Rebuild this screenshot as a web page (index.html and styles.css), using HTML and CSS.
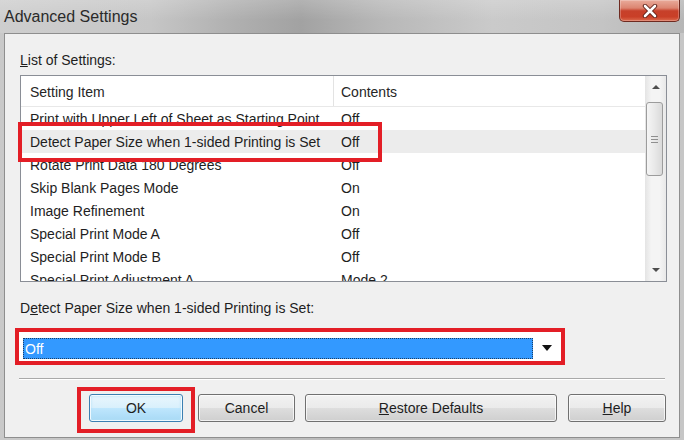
FILE: index.html
```html
<!DOCTYPE html>
<html>
<head>
<meta charset="utf-8">
<link rel="stylesheet" href="styles.css">
</head>
<body>
<div class="window">
  <div class="titlebar">
    <span class="title">Advanced Settings</span>
    <div class="close">
      <svg width="16" height="14" viewBox="0 0 16 14">
        <path d="M3 2 L13 12 M13 2 L3 12" stroke="#5a1d14" stroke-width="4.4" stroke-linecap="round" fill="none"/>
        <path d="M3 2 L13 12 M13 2 L3 12" stroke="#ffffff" stroke-width="2.6" stroke-linecap="round" fill="none"/>
      </svg>
    </div>
  </div>
  <div class="client">
    <div class="label"><u>L</u>ist of Settings:</div>
    <div class="listbox">
      <div class="listmain">
        <div class="header"><div class="c1">Setting Item</div><div class="c2">Contents</div></div>
        <div class="row"><div class="c1">Print with Upper Left of Sheet as Starting Point</div><div class="c2">Off</div></div>
        <div class="row sel"><div class="c1">Detect Paper Size when 1-sided Printing is Set</div><div class="c2">Off</div></div>
        <div class="row"><div class="c1">Rotate Print Data 180 Degrees</div><div class="c2">Off</div></div>
        <div class="row"><div class="c1">Skip Blank Pages Mode</div><div class="c2">On</div></div>
        <div class="row"><div class="c1">Image Refinement</div><div class="c2">On</div></div>
        <div class="row"><div class="c1">Special Print Mode A</div><div class="c2">Off</div></div>
        <div class="row"><div class="c1">Special Print Mode B</div><div class="c2">Off</div></div>
        <div class="row"><div class="c1">Special Print Adjustment A</div><div class="c2">Mode 2</div></div>
      </div>
      <div class="vscroll">
        <div class="sbtn"><span class="arrow-up"></span></div>
        <div class="track"><div class="thumb"><span class="grip"></span></div></div>
        <div class="sbtn"><span class="arrow-down"></span></div>
      </div>
    </div>
    <div class="label label2">D<u>e</u>tect Paper Size when 1-sided Printing is Set:</div>
    <div class="combo-mark">
      <div class="combo">
        <div class="combo-sel">Off</div>
        <div class="combo-arrow"><span class="arrow-down big"></span></div>
      </div>
    </div>
    <div class="sep"></div>
    <div class="buttons">
      <div class="ok-mark"><button class="btn default">OK</button></div>
      <button class="btn cancel">Cancel</button>
      <button class="btn restore"><u>R</u>estore Defaults</button>
      <button class="btn help"><u>H</u>elp</button>
    </div>
    <div class="row-mark"></div>
  </div>
</div>
</body>
</html>
```
FILE: styles.css
```css
html, body {
  margin: 0;
  padding: 0;
}
body {
  width: 684px;
  height: 440px;
  overflow: hidden;
  font-family: "Liberation Sans", Arial, sans-serif;
  background: #c2c2c2;
}
.window {
  width: 684px;
  height: 440px;
  display: flex;
  flex-direction: column;
  background: linear-gradient(90deg, #c9c9c9, #bdbdbd 40%, #b9b9b9 60%, #c6c6c6);
}
.titlebar {
  height: 33px;
  flex: none;
  display: flex;
  align-items: flex-start;
  background:
    linear-gradient(rgba(255,255,255,0.18), rgba(255,255,255,0) 60%),
    linear-gradient(90deg, #cecece 0%, #c6c6c6 22%, #b0b0b0 34%, #a2a2a2 44%, #b8b8b8 56%, #cacaca 72%, #c4c4c4 88%, #b6b6b6 100%);
}
.title {
  font-size: 16px;
  line-height: 33px;
  padding-left: 4px;
  color: #2a2a2a;
}
.close {
  margin-left: auto;
  margin-right: 4px;
  width: 61px;
  height: 22px;
  box-sizing: border-box;
  border: 1px solid #6e2a20;
  border-top: none;
  border-radius: 0 0 5px 5px;
  background: linear-gradient(#e9ab9b 0%, #dc8571 38%, #c7402a 52%, #c93f27 80%, #dc6a4e 100%);
  display: flex;
  align-items: center;
  justify-content: center;
  box-shadow: inset 0 0 0 1px rgba(255,255,255,0.25);
}
.client {
  position: relative;
  margin: 0 4px;
  height: 405px;
  box-sizing: border-box;
  border: 1px solid #8e8e8e;
  background: #f0f0f0;
  padding: 18px 0 0 15px;
  color: #1e1e1e;
}
.label {
  font-size: 14px;
  line-height: 16px;
}
.label2 {
  margin-top: 18px;
}
.listbox {
  margin-top: 7px;
  width: 647px;
  height: 207px;
  box-sizing: border-box;
  border: 1px solid #8a8e96;
  background: #ffffff;
  display: flex;
  font-size: 14px;
}
.listmain {
  width: 624px;
  overflow: hidden;
}
.header {
  display: flex;
  height: 31px;
  line-height: 32px;
  box-sizing: border-box;
  border-bottom: 1px solid #e8e8e8;
  color: #262626;
}
.c1 {
  width: 313px;
  flex: none;
  box-sizing: border-box;
  padding-left: 9px;
  white-space: nowrap;
  overflow: hidden;
}
.c2 {
  padding-left: 7px;
  white-space: nowrap;
}
.header .c1 {
  border-right: 1px solid #e3e3e3;
}
.row {
  display: flex;
  height: 23px;
  line-height: 25px;
  overflow: hidden;
}
.row.sel {
  background: #ececec;
}
.vscroll {
  width: 21px;
  flex: none;
  display: flex;
  flex-direction: column;
  background: linear-gradient(90deg, #e4e4e4, #f4f4f4 30%, #f4f4f4 70%, #e8e8e8);
}
.sbtn {
  height: 22px;
  flex: none;
  display: flex;
  align-items: center;
  justify-content: center;
}
.arrow-up {
  width: 0;
  height: 0;
  border-left: 4px solid transparent;
  border-right: 4px solid transparent;
  border-bottom: 4px solid #4e4e4e;
}
.arrow-down {
  width: 0;
  height: 0;
  border-left: 4px solid transparent;
  border-right: 4px solid transparent;
  border-top: 4px solid #4e4e4e;
}
.arrow-down.big {
  border-left-width: 5px;
  border-right-width: 5px;
  border-top: 6px solid #111111;
}
.track {
  flex: 1;
  padding-top: 4px;
}
.thumb {
  margin-left: 1px;
  width: 17px;
  height: 74px;
  box-sizing: border-box;
  border: 1px solid #9c9c9c;
  border-radius: 3px;
  background: linear-gradient(90deg, #f5f5f5, #e9e9e9 50%, #dadada);
  display: flex;
  align-items: center;
  justify-content: center;
}
.grip {
  width: 7px;
  height: 7px;
  background: repeating-linear-gradient(#8f8f8f 0 1px, transparent 1px 3px);
}
.combo-mark {
  margin-top: 12px;
  margin-left: -5px;
  width: 550px;
  height: 37px;
  box-sizing: border-box;
  border: 4px solid #e31e26;
}
.combo {
  height: 29px;
  background: #ffffff;
  display: flex;
  align-items: center;
  padding-left: 4px;
}
.combo-sel {
  width: 510px;
  height: 21px;
  margin-top: 3px;
  box-sizing: border-box;
  background: #3399ff;
  outline: 1px dotted #1c3f66;
  outline-offset: -1px;
  color: #ffffff;
  font-size: 14px;
  line-height: 22px;
  padding-left: 2px;
}
.combo-arrow {
  flex: 1;
  display: flex;
  align-items: center;
  justify-content: center;
  margin-top: 2px;
}
.sep {
  margin-top: 13px;
  margin-left: -1px;
  width: 646px;
  border-top: 1px solid #a9a9a9;
  border-bottom: 1px solid #ffffff;
}
.buttons {
  margin-top: 7px;
  margin-left: 57px;
  display: flex;
  align-items: flex-start;
}
.ok-mark {
  border: 4px solid #e31e26;
  padding: 3px 8px 7px 8px;
}
.btn {
  height: 28px;
  margin-top: 7px;
  box-sizing: border-box;
  border: 1px solid #707070;
  border-radius: 3px;
  background: linear-gradient(#f2f2f2 0%, #ebebeb 48%, #dddddd 52%, #cfcfcf 100%);
  box-shadow: inset 0 0 0 1px rgba(255,255,255,0.7);
  font-family: "Liberation Sans", Arial, sans-serif;
  font-size: 14px;
  color: #1e1e1e;
  padding: 0;
}
.btn.default {
  width: 94px;
  margin-top: 0;
  border-color: #3c7fb1;
  background: linear-gradient(#eaf6fd 0%, #d9f0fc 48%, #bee6fd 52%, #a7d9f5 100%);
  box-shadow: inset 0 0 0 1px rgba(255,255,255,0.8), inset 0 0 3px 1px #b4e0f7;
}
.btn.cancel {
  width: 97px;
  margin-left: 3px;
}
.btn.restore {
  width: 252px;
  margin-left: 10px;
}
.btn.help {
  width: 98px;
  margin-left: 11px;
}
.row-mark {
  position: absolute;
  left: 13px;
  top: 88px;
  width: 364px;
  height: 40px;
  box-sizing: border-box;
  border: 4px solid #e31e26;
}
```
